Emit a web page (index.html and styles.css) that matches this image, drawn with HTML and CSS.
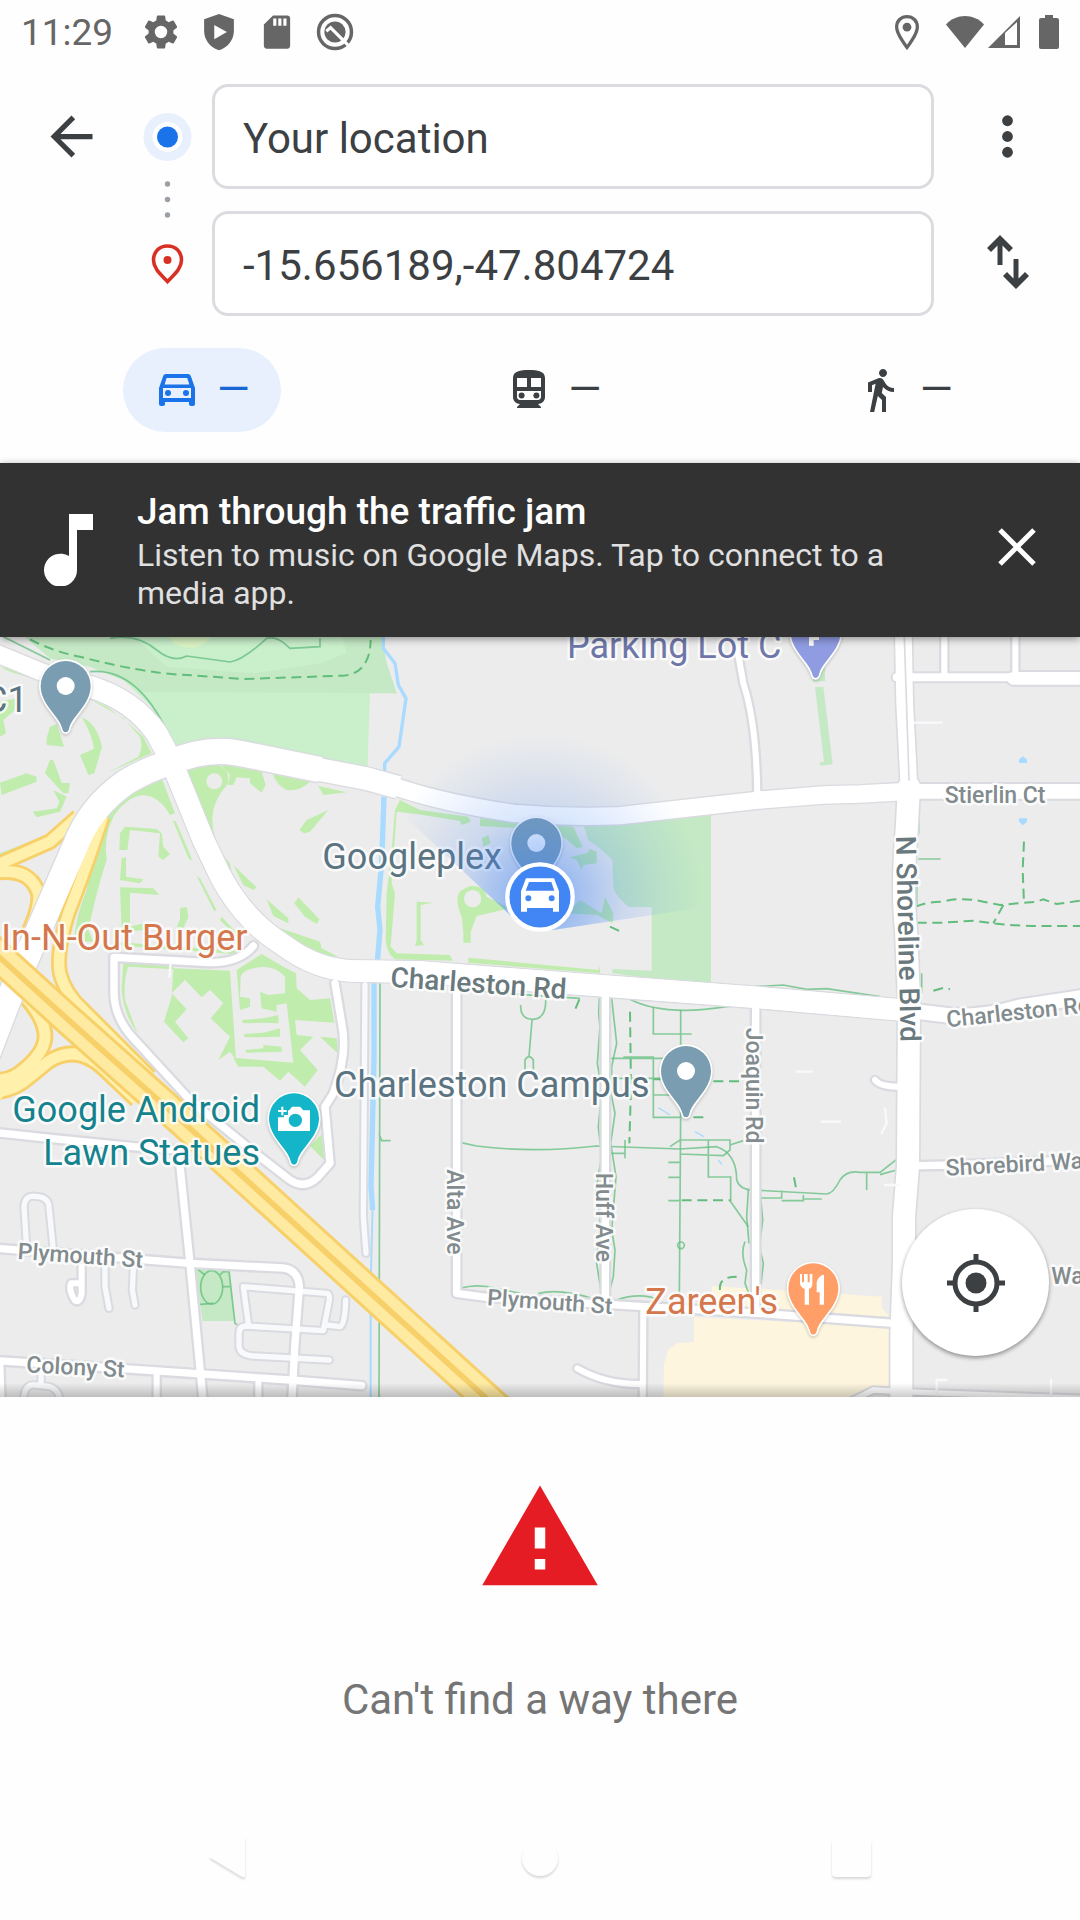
FILE: index.html
```html
<!DOCTYPE html>
<html lang="en">
<head>
<meta charset="utf-8">
<meta name="viewport" content="width=device-width, initial-scale=1">
<title>Directions</title>
<link rel="stylesheet" href="styles.css">
</head>
<body>
<div class="screen">
  <div class="status-bar">
    <div class="status-left">
      <span class="clock">11:29</span>
      <svg class="status-icon" viewBox="1 1 22 22"><path d="M19.140 12.940c.04-.3.06-.61.06-.94s-.02-.64-.07-.94l2.030-1.580a.49.49 0 0 0 .12-.61l-1.920-3.320a.49.49 0 0 0-.59-.22l-2.390.96a7 7 0 0 0-1.620-.94l-.36-2.540a.48.48 0 0 0-.48-.41h-3.840a.47.47 0 0 0-.47.41l-.36 2.540c-.59.24-1.130.57-1.620.94l-2.390-.96a.48.48 0 0 0-.59.22L2.740 8.870a.48.48 0 0 0 .12.61l2.030 1.580c-.05.3-.09.63-.09.94s.02.64.07.94l-2.030 1.580a.49.49 0 0 0-.12.61l1.920 3.320c.12.22.37.29.59.22l2.390-.96c.5.38 1.030.7 1.620.94l.36 2.540c.05.24.24.41.48.41h3.840c.24 0 .44-.17.47-.41l.36-2.540a7 7 0 0 0 1.620-.94l2.390.96c.22.08.47 0 .59-.22l1.920-3.320a.47.47 0 0 0-.12-.61zM12 15.600A3.600 3.600 0 1 1 12 8.400a3.600 3.600 0 0 1 0 7.200z"/></svg>
      <svg class="status-icon" viewBox="0 0 24 24"><path fill-rule="evenodd" d="M12 .6 2.600 4v7.200c0 5.600 3.600 10.600 9.400 12.400 5.800-1.800 9.400-6.800 9.400-12.400V4zM9 7.500v9l8-4.500z"/></svg>
      <svg class="status-icon" viewBox="0 0 24 24"><path fill-rule="evenodd" d="M18.500 1.500H9.500L3.700 7.300v13.400c0 1.100.8 1.800 1.800 1.800h13c1.100 0 1.800-.8 1.800-1.800V3.300c0-1-.8-1.800-1.800-1.800zM9.600 8V3.500h2V8zm3.200 0V3.500h2V8zm3.200 0V3.500h2V8z"/></svg>
      <svg class="status-icon" viewBox="0 0 24 24"><circle cx="12" cy="12" r="10.400" fill="none" stroke="#666" stroke-width="2.200"/><circle cx="12" cy="12" r="6.700"/><path d="m6.500 11.500 2.700-2.300 12.300 12.300" fill="none" stroke="#fff" stroke-width="2"/></svg>
    </div>
    <div class="status-right">
      <svg class="location" viewBox="0 0 24 24"><path d="M12 1.700c-4 0-6.900 2.900-6.900 6.900 0 5 6.900 13.700 6.900 13.700s6.900-8.700 6.900-13.700c0-4-2.900-6.900-6.900-6.900z" fill="none" stroke="#666" stroke-width="2.200"/><circle cx="12" cy="8.800" r="2.900"/></svg>
      <svg class="wifi" viewBox="0 0 40 34"><path d="M20 33 1 9.500C11-2 29-2 39 9.500z"/></svg>
      <svg class="signal" viewBox="0 0 34 34"><path fill-rule="evenodd" d="M1 33 33 1v32zM18 18v12h12V7z"/></svg>
      <svg class="battery" viewBox="0 0 20 34"><path d="M6 0h8v3h4q2 0 2 2v27q0 2-2 2H2q-2 0-2-2V5q0-2 2-2h4z"/></svg>
    </div>
  </div>

  <header class="route">
    <button class="icon-button back" aria-label="Back"><svg viewBox="0 0 24 24"><path d="M20 11H7.800l5.600-5.600L12 4l-8 8 8 8 1.400-1.400L7.800 13H20z"/></svg></button>
    <svg class="route-markers" viewBox="0 0 89 232" aria-hidden="true">
      <circle cx="44.500" cy="53" r="24" fill="#e8f0fe"/><circle cx="44.500" cy="53" r="15" fill="#fff"/><circle cx="44.500" cy="53" r="10.500" fill="#1a73e8"/>
      <g fill="#9aa0a6"><circle cx="44.500" cy="100" r="2.700"/><circle cx="44.500" cy="115.500" r="2.700"/><circle cx="44.500" cy="131" r="2.700"/></g>
      <path d="M44.500 162c-8.500 0-14 6-14 14 0 9 8 15 14 21.500 6-6.500 14-12.500 14-21.500 0-8-5.500-14-14-14z" fill="none" stroke="#d93025" stroke-width="3.600"/><circle cx="44.500" cy="176" r="4" fill="#d93025"/>
    </svg>
    <input class="place origin" type="text" aria-label="Starting point" value="Your location">
    <button class="icon-button more" aria-label="More options"><svg viewBox="0 0 24 24"><circle cx="12" cy="6" r="2.050"/><circle cx="12" cy="12" r="2.050"/><circle cx="12" cy="18" r="2.050"/></svg></button>
    <input class="place destination" type="text" aria-label="Destination" value="-15.656189,-47.804724">
    <button class="icon-button swap" aria-label="Swap start and destination"><svg viewBox="0 0 63 63"><path d="M24 3 11 16l4 4 6.500-6.500V33h5V13.500L33 20l4-4zM40 57 27 44l4-4 6.500 6.500V27h5v19.500L49 40l4 4z"/></svg></button>
  </header>

  <nav class="modes" aria-label="Travel mode">
    <button class="mode selected" aria-label="Driving"><svg viewBox="0 0 24 24"><path fill-rule="evenodd" d="M18.900 5c-.2-.6-.8-1-1.400-1h-11c-.7 0-1.200.4-1.400 1L3 11v8c0 .6.500 1 1 1h1c.6 0 1-.4 1-1v-1h12v1c0 .6.500 1 1 1h1c.6 0 1-.4 1-1v-8zM6.800 6h10.300l1.100 3.200H5.800zM19 16H5v-5h14z"/><circle cx="7.500" cy="13.500" r="1.500"/><circle cx="16.500" cy="13.500" r="1.500"/></svg><span>—</span></button>
    <button class="mode" aria-label="Transit"><svg viewBox="0 0 24 24"><path fill-rule="evenodd" d="M12 2c-4.400 0-8 .5-8 4v9.500C4 17.400 5.600 19 7.500 19L6 20.500v.5h12v-.5L16.500 19c1.900 0 3.500-1.600 3.500-3.500V6c0-3.500-3.600-4-8-4zM6 6h5v4.500H6zm7 0h5v4.500h-5zm3.500 11h-9c-.8 0-1.500-.7-1.500-1.500v-3h12v3c0 .8-.7 1.500-1.500 1.500z"/><circle cx="8.300" cy="14.800" r="1.500"/><circle cx="15.700" cy="14.800" r="1.500"/></svg><span>—</span></button>
    <button class="mode" aria-label="Walking"><svg viewBox="0 0 24 24"><path d="M13.500 5.500c1.100 0 2-.9 2-2s-.9-2-2-2-2 .9-2 2 .9 2 2 2zM9.800 8.900 7 23h2.100l1.800-8 2.100 2v6h2v-7.500l-2.100-2 .6-3A7.300 7.300 0 0 0 19 13v-2c-1.900 0-3.500-1-4.300-2.400l-1-1.600a2 2 0 0 0-1.700-1c-.3 0-.5.1-.8.1L6 8.300V13h2V9.600z"/></svg><span>—</span></button>
  </nav>

  <section class="banner">
    <svg class="note" viewBox="0 0 49 72"><path d="M25 0h24v16H33v40a16.500 16.500 0 1 1-8-14z"/></svg>
    <div class="banner-text">
      <h2>Jam through the traffic jam</h2>
      <p>Listen to music on Google Maps. Tap to connect to a media app.</p>
    </div>
    <button class="close" aria-label="Dismiss"><svg viewBox="0 0 38 38"><path d="m2 2 34 34M36 2 2 36" fill="none" stroke="#fff" stroke-width="5"/></svg></button>
  </section>

  <main class="map">
    <svg class="map-canvas" viewBox="0 21 3240 2280" preserveAspectRatio="xMidYMid slice" role="img" aria-label="Map around Googleplex">
      <defs>
        <radialGradient id="beam" gradientUnits="userSpaceOnUse" cx="1620" cy="801" r="490">
          <stop offset="0" stop-color="#4285f4" stop-opacity=".75"/><stop offset=".25" stop-color="#4285f4" stop-opacity=".42"/><stop offset=".5" stop-color="#4285f4" stop-opacity=".2"/><stop offset=".75" stop-color="#4285f4" stop-opacity=".09"/><stop offset="1" stop-color="#4285f4" stop-opacity="0"/>
        </radialGradient>
        <path id="pin" d="M0 139C-6 139-9 134-11 125C-20 90-75 55-75 0A75 75 0 0 1 75 0C75 55 20 90 11 125C9 134 6 139 0 139Z"/>
        <path id="parkway-west" d="M-60 1330L25 1110L125 880L225 650Q270 530 380 455Q450 415 510 398Q620 350 720 370L960 419"/>
        <path id="parkway-mid" d="M940 415L1100 446L1195 472"/>
        <path id="parkway-east" d="M1160 461L1210 478Q1340 520 1540 550Q1700 564 1860 557L2280 510L2470 495L2580 492L2726 484"/>
        <path id="charleston-nw" d="M-20 66L130 128L290 175"/>
        <path id="charleston" d="M270 170Q400 210 470 310Q510 380 545 470L610 630L660 735Q730 870 850 945Q950 1020 1060 1023L1260 1026L1800 1067L2280 1103L2726 1142"/>
        <path id="shoreline-north" d="M2710 0L2714 220L2727 470"/>
        <path id="shoreline" d="M2727 470L2720 600Q2705 780 2718 900L2727 1110L2724 1610L2712 1760L2712 1900L2704 2120V2320"/>
        <path id="freeway" d="M-40 947L200 1165L540 1468L1140 2015L1500 2342"/>
        <g id="streets">
          <path d="M1370 1060V1990L1460 2002L2280 2050L2680 2080"/><path d="M1816 1080V2020"/><path d="M2267 1110V2050"/>
          <path d="M2760 1607L2860 1605L3240 1590"/>
          <path d="M-10 1508L150 1525L400 1550L535 1560L570 1900L610 2320"/>
          <path d="M-10 1855L570 1900L850 1914Q895 1920 898 1970L885 2140L875 2320"/>
          <path d="M-10 2192L370 2216L870 2250L1085 2267"/>
          <path d="M760 948Q720 998 630 998L342 982V1080Q340 1160 400 1225L570 1410L760 1565L870 1650Q915 1680 955 1640L990 1600L975 1430L1000 1390Q1045 1270 1025 1180L1005 1060"/>
        </g>
        <g id="lanes">
          <path d="M2200 -10L2230 160Q2270 280 2272 500"/><path d="M2833 20V140"/><path d="M3046 20V140"/>
          <path d="M1930 2045L1928 2320"/><path d="M1732 2215Q1820 2265 1928 2262"/><path d="M2625 1350Q2640 1370 2695 1370"/>
          <path d="M470 2235V2320M775 2260V2320M1 2200L5 2320"/><path d="M245 1910V1990Q240 2020 225 2012Q205 1980 213 1960H240"/>
        </g>
        <g id="alleys">
          <path d="M1095 1065L1090 1760L1098 1870"/><path d="M80 1855L72 1730Q75 1695 105 1699Q145 1700 147 1730L160 1860"/>
          <path d="M315 1910V1970L327 2035M400 1915L397 1980L405 2025"/>
          <path d="M745 2080L730 1970L980 1990Q990 1992 988 2010L970 2102L735 2088Q715 2090 717 2120V2150Q720 2175 760 2178L988 2190M980 2085L1020 2090Q1035 2085 1037 2010"/>
          <path d="M70 2320Q70 2260 105 2265L150 2270Q180 2280 180 2320M123 2225V2265"/>
        </g>
        <g id="ramps">
          <path d="M-20 728Q90 710 115 790Q122 830 80 920"/>
          <path d="M-20 710L150 635L235 560"/>
          <path d="M75 1100Q138 1170 135 1225Q130 1270 70 1320Q30 1355 -20 1350"/>
          <path d="M-20 1385Q40 1385 90 1340L145 1295Q230 1240 310 1315L410 1410"/>
        </g>
        <path id="ramp-east" d="M308 560Q260 710 205 850Q168 970 180 1030Q195 1090 250 1140L450 1340"/>
      </defs>

      <rect class="land" x="-500" y="-500" width="4240" height="3300"/>

      <g class="park">
        <path d="M50 0H1140L1160 100L1190 190H1110L1102 425L720 345L520 345L450 225L370 150L270 110L150 85Z"/>
        <path class="park-dark" d="M50 0H1140L1160 100L1190 190L430 185L370 150L270 110L150 85Z"/>
        <path class="park-inner" d="M380 0H1020L1040 70L960 100L760 130L500 110Z"/>
        <path class="park-lime" d="M500 0H650L620 35Q575 70 520 40Z"/>
        <path class="park-dark" d="M1750 585L2133 550V1070L1837 1030V1017L1955 1022V832L1885 830Q1840 790 1840 770L1837 690L1800 655L1765 630Z"/>
        <path class="park-dark" d="M2445 172L2470 170L2498 403L2460 407V396H2472ZM2440 155V140L2475 100V153Z"/>
        <path class="park-dark" d="M583 1910L690 1920L705 2073H608Z"/>
      </g>

      <g class="grass">
        <path d="M0 110L70 125L130 145V155L30 125ZM0 215L50 205L45 240L10 270L18 310L0 320ZM150 290L170 282L192 350L140 345V325ZM245 262Q290 280 306 350L283 430L265 435L240 375L282 356Q275 310 245 262Z"/>
        <path d="M150 390H160L185 458L210 460L205 490L190 490L135 430ZM0 458L80 430L110 440V455L5 495ZM160 480L200 500L180 545L110 562L98 545L170 535L178 515ZM265 205L370 265L420 320Q430 350 415 380L320 430L430 380L455 370L430 320L380 275L320 230Z"/>
        <path d="M220 560L180 600L0 670V675L170 605Z"/>
        <path d="M330 550Q400 470 485 445L525 550L510 555Q480 500 430 495Q380 500 340 560Q310 620 320 690Q290 780 265 900L280 935H225Q220 880 260 780L290 600Z"/>
        <path d="M360 610L375 590L470 597L485 610L490 650L510 672L490 690L475 680L480 610L390 600L382 660H358ZM365 685L378 682V740L430 748L420 760L360 750ZM360 772L460 775L478 795L390 788V890L430 880L440 900L365 905ZM540 835L560 830L565 860L550 895L530 890L540 870Z"/>
        <path d="M518 570L528 575L577 690L567 688ZM590 738L600 745L650 840L642 843ZM665 860L710 910L705 915L660 870ZM340 935L740 965L700 972L340 945Z"/>
        <path fill-rule="evenodd" d="M555 415L640 402Q690 410 685 460Q640 510 637 560Q635 640 690 700L700 755L650 700ZM643 430A23 23 0 1 0 643 478A23 23 0 1 0 643 430Z"/>
        <path d="M660 402L785 425L797 465L785 488L750 460V445L710 442L700 465H685L690 435ZM818 432L930 455Q900 485 860 480Q830 465 818 432ZM955 468L1040 487L970 495ZM985 540L930 605L912 610L898 600L920 570ZM700 705L770 772L760 780L730 765ZM800 808L865 865V880L820 858ZM895 802L958 868L950 882L915 860L883 820ZM812 885L960 935L965 955L1015 980L960 975Z"/>
        <path d="M370 995L520 1010V1015L690 1022L708 1290L690 1265L655 1290L690 1220L632 1165L670 1120L630 1080L605 1102L555 1050L515 1090L560 1138L525 1175L565 1225L550 1237L492 1175L515 1100L520 1018L385 1010Q370 1050 375 1110L412 1210Q370 1150 365 1080Z"/>
        <path d="M710 1020L785 972L850 1010L888 1030L890 1075L930 1110L990 1105L1003 1178L885 1170L890 1215L940 1220L900 1260L953 1320L915 1370L865 1325L840 1352L790 1310L715 1310L700 1285L720 1285L880 1298L860 1120L830 1125V1145L785 1135L780 1085L805 1095L855 1090V1040Q820 1000 760 1015Q730 1020 722 1040L720 1100L750 1105V1130L720 1140ZM725 1170L790 1165L835 1155V1180L790 1178L730 1180ZM730 1212L790 1208L840 1195V1220L735 1222ZM735 1260L790 1255V1245L845 1250V1265L740 1268ZM960 1220L1010 1225L1015 1272Z"/>
        <path d="M930 1548L965 1513L975 1593Z"/>
        <path d="M1185 540L1200 510L1260 540L1405 560L1412 575L1385 585L1380 573L1250 552L1190 545L1175 760L1185 790L1172 950L1190 970L1350 975L1358 992L1185 988Q1160 970 1157 930L1160 790L1175 660Z"/>
        <path d="M1440 565L1720 590L1748 650L1730 655L1690 620L1660 600L1440 588ZM1445 625L1465 615L1472 640L1450 650ZM1708 682L1760 670L1770 657L1790 665V700L1750 705L1745 720L1730 690ZM1405 983L1795 1020L1800 1008V1030L1405 998ZM1250 815L1300 818L1262 825V930L1272 945L1245 948L1250 930Z"/>
        <path fill-rule="evenodd" d="M1410 768Q1455 765 1460 800L1530 835L1430 858L1412 905V938H1390V905L1385 860Q1360 800 1385 780ZM1418 780A26 26 0 1 0 1418 832A26 26 0 1 0 1418 780Z"/>
        <path d="M1700 850L1740 810L1805 850L1815 800L1840 850L1838 880L1790 855Z"/>
      </g>

      <g class="sand">
        <path d="M2082 2062L2680 2090L2670 2270L2500 2320H1990L1992 2200L2005 2160L2030 2140L2082 2136Z"/>
        <path d="M2135 1968L2490 1990L2645 2000V2035L2670 2060L2135 2040Z"/>
      </g>

      <g class="water">
        <path d="M1150 0L1150 55L1185 100L1195 165L1218 205L1210 260L1197 350L1154 400V440" stroke-width="10"/>
        <path d="M1152 500L1145 700L1133 830L1140 900L1132 995M1122 1060V1290L1113 1670L1118 1740" stroke-width="16"/>
        <path d="M1118 1730L1112 1960V2320" stroke-width="6"/>
        <path d="M1975 1433L2010 1455M2085 1505L2112 1520M2155 1590L2165 1603" stroke-width="4"/>
        <path d="M3062 391L3069 385L3076 391V394H3062ZM3062 570H3076V573L3069 579L3062 573Z" stroke-width="10"/>
      </g>

      <g class="trail">
        <path d="M10 20L150 90M270 125Q420 110 518 340M330 25Q410 10 470 60Q520 100 560 78L690 96Q730 90 800 25Q830 15 870 55L960 50V25"/>
        <path d="M1140 1060L1137 2320M1137 1510L1145 1532H1172"/>
        <path d="M1562 1125Q1560 1168 1600 1168Q1640 1165 1637 1105M1596 1170L1587 1280M1575 1320V1290Q1587 1270 1600 1290V1320"/>
        <path d="M1450 1085L1560 1093L1740 1105M1798 1105L1796 1150L1800 1190L1792 1300L1806 1380L1795 1490L1805 1580L1788 1680L1800 1760L1790 1900L1805 1995M1835 1105L1850 1240L1835 1310V1400L1845 1450L1832 1540L1848 1640L1835 1800L1845 1860L1840 1940L1828 1985M1890 1108Q1990 1160 2180 1130L2270 1120"/>
        <path d="M1380 1537L1430 1548Q1600 1570 1790 1548L2040 1557L2150 1550Q2210 1570 2210 1650Q2220 1680 2260 1680L2480 1692Q2500 1690 2520 1650Q2540 1620 2580 1627H2640L2690 1588M2640 1634L2690 1620M2600 1630V1680M2280 1704H2345V1682M2345 1712H2410V1695M2410 1707H2465"/>
        <path d="M1960 1132V1212H2075M2042 1140V1450L2038 2000M1870 1281H1960V1462H2042M1960 1395H2020M2010 1550L2040 1530H2190V1560L2170 1577L2040 1572M2125 1530V1641H2192V1715L2245 1790M2005 1597H2042M2005 1642H2042M2005 1712H2042M2190 1545L2230 1532M1875 1530V1585M1833 1570H1875M1833 1285H2015M1833 1345H2000"/>
        <path d="M2245 1680L2240 1760L2247 1840M2280 1680L2288 1770L2278 1850L2290 1900L2280 1990M2235 1835Q2220 1870 2240 1920L2235 1960L2250 2000"/>
        <circle cx="2043" cy="1846" r="10"/>
        <path d="M1380 1975Q1430 1960 1490 1975L1560 1990M1615 1990Q1680 1975 1775 2005M1850 2010Q1920 1985 1980 2010"/>
        <path d="M583 1910L615 1935M600 2023L640 2020M668 1970H690M660 1935L670 1925H687L705 2080L715 2087"/><ellipse cx="635" cy="1972" rx="33" ry="50"/>
        <path d="M2265 1070L2350 1065L2420 1078L2480 1076L2640 1100M2756 530V610M2755 687H2822M2750 760V830M2765 1030V1090"/>
      </g>
      <g class="trail dashed">
        <path d="M90 28Q160 65 240 80Q430 130 560 135L730 147L1030 137Q1110 130 1112 30"/>
        <path d="M1890 1145L1893 1370L1888 1540M2140 1354H2220M1960 1348H1985M2080 1462H2120M2045 1711H2192M2160 1980Q2155 1940 2210 1940"/>
        <path d="M2748 830Q2780 815 2830 815Q2880 800 2950 815L3000 825L3110 815L3130 808L3170 822L3240 812M2750 878H2830L2920 872L2980 880Q3050 890 3240 888M3010 825L2980 880M3072 635L3068 720L3072 818M2800 1082L2830 1074L2850 1078"/>
        <path d="M1830 890L1862 905M1738 1108L1724 1142M2382 1642L2390 1685"/>
      </g>

      <g class="casing">
        <use href="#alleys" stroke-width="28"/><use href="#lanes" stroke-width="32"/><use href="#streets" stroke-width="36"/>
        <path d="M2690 142H3240" stroke-width="36"/><path d="M3040 145H3240" stroke-width="50"/>
        <path d="M2727 484H3260" stroke-width="56"/><path d="M2730 1142L2860 1158Q2960 1160 3060 1130L3260 1100" stroke-width="56"/>
        <path d="M2500 2340L2620 2280L2700 2285L3260 2305" stroke-width="28"/>
        <use class="square" href="#parkway-mid" stroke-width="76"/><use class="square" href="#parkway-east" stroke-width="60"/><use href="#charleston-nw" stroke-width="60"/><use href="#charleston" stroke-width="72"/><use href="#shoreline-north" stroke-width="60"/><use href="#shoreline" stroke-width="76"/>
      </g>
      <g class="surface">
        <use class="alley" href="#alleys" stroke-width="16"/><use href="#lanes" stroke-width="18"/><use href="#streets" stroke-width="22"/>
        <path d="M2690 142H3240" stroke-width="24"/><path d="M3040 145H3240" stroke-width="38"/>
        <path d="M2727 484H3260" stroke-width="44"/><path d="M2730 1142L2860 1158Q2960 1160 3060 1130L3260 1100" stroke-width="44"/>
        <path d="M2500 2340L2620 2280L2700 2285L3260 2305" stroke-width="16"/>
        <use href="#charleston-nw" stroke-width="52"/><use href="#charleston" stroke-width="64"/><use href="#parkway-east" stroke-width="52"/><use href="#shoreline-north" stroke-width="50"/><use href="#shoreline" stroke-width="66"/>
        <path class="faint" d="M2745 278H2825M2390 1325H2436M2465 1475H2520M2655 1435L2660 1480L2645 1510M2655 1665H2695M2810 2295V2250H2840M3153 2300V2250M512 1000L508 1040" stroke-width="7"/>
        <path class="median" d="M2713 20L2727 450" stroke-width="5"/>
      </g>

      <g class="ramp-edge"><use href="#ramps" stroke-width="50"/></g>
      <g class="ramp"><use href="#ramps" stroke-width="33"/><path d="M-20 1350L60 1330L0 1395Z" stroke-width="20"/></g>
      <g class="casing"><use class="square" href="#parkway-west" stroke-width="84"/></g>
      <g class="ramp-edge"><use href="#ramp-east" stroke-width="48"/></g>
      <g class="ramp"><use href="#ramp-east" stroke-width="32"/></g>
      <g class="surface"><use class="square" href="#parkway-west" stroke-width="76"/><use class="square" href="#parkway-mid" stroke-width="68"/><use href="#charleston" stroke-width="64"/></g>
      <g class="freeway">
        <use href="#freeway" stroke="#f7d06a" stroke-width="98"/><use href="#freeway" stroke="#ffeaa2" stroke-width="80"/><use href="#freeway" stroke="#f7d06a" stroke-width="17"/>
      </g>

      <g class="labels">
        <g class="poi slate"><text x="83" y="245" text-anchor="end">C1</text><text x="967" y="716">Googleplex</text><text x="1002" y="1400">Charleston Campus</text></g>
        <g class="poi indigo"><text x="1701" y="83">Parking Lot C</text></g>
        <g class="poi orange"><text x="4" y="961">In-N-Out Burger</text><text x="1936" y="2053">Zareen's</text></g>
        <g class="poi teal"><text x="780" y="1476" text-anchor="end">Google Android</text><text x="780" y="1606" text-anchor="end">Lawn Statues</text></g>
        <g class="avenue"><text transform="translate(1170 1070) rotate(4)">Charleston Rd</text><text transform="translate(2688 618) rotate(88.700)">N Shoreline Blvd</text></g>
        <g class="street">
          <text transform="translate(52 1887) rotate(4)">Plymouth St</text><text transform="translate(78 2227) rotate(3)">Colony St</text><text transform="translate(1460 2026) rotate(4)">Plymouth St</text>
          <text transform="translate(1341 1618) rotate(90)">Alta Ave</text><text transform="translate(1788 1628) rotate(90)">Huff Ave</text><text transform="translate(2238 1193) rotate(90)">Joaquin Rd</text>
          <text x="2834" y="520">Stierlin Ct</text><text transform="translate(2842 1192) rotate(-6)">Charleston Rd</text><text transform="translate(2838 1637) rotate(-3)">Shorebird Way</text><text x="3154" y="1961">Way</text>
        </g>
      </g>

      <g class="pins">
        <g transform="translate(197 168)"><use href="#pin" fill="#7b9db1"/><circle r="27" fill="#fff"/></g>
        <g transform="translate(1609 639)"><use href="#pin" fill="#7b9db1"/><circle r="27" fill="#fff"/></g>
        <g transform="translate(2058 1323)"><use href="#pin" fill="#7b9db1"/><circle r="27" fill="#fff"/></g>
        <g transform="translate(882 1465)"><use href="#pin" fill="#15b5c9"/><path fill="#fff" fill-rule="evenodd" d="M-42-35H-32V-25H-22V-19H-32V-9H-38V-19H-48V-25H-38V-35ZM-14-24L-6-35H18L28-24H48V38H-48V-3H-30V-10H-18V-24ZM4-14A20 20 0 1 0 4 26A20 20 0 1 0 4-14Z"/></g>
        <g transform="translate(2440 1975)"><use href="#pin" fill="#ff9e67"/><path fill="#fff" d="M-40-43H-34V-18H-28V-43H-17V-18H-11V-43H-3V-13Q-3-2-13 2V49H-26V2Q-40-4-40-15ZM32-41V49H19V12H10V-18Q14-38 32-41Z"/></g>
        <g transform="translate(2447 5)"><use href="#pin" fill="#909ce1"/><path fill="#fff" d="M-20 0H10V25H-6V42H-20Z"/></g>
      </g>

      <path d="M1535 860L1150 500A490 490 0 0 1 2140 827L1660 900Z" fill="url(#beam)"/>
      <circle cx="1620" cy="801" r="98" fill="#4285f4" stroke="#fff" stroke-width="13"/>
      <path fill="#fff" fill-rule="evenodd" d="M1578 745H1662L1677 784V845H1659V834H1581V845H1563V784ZM1587 756L1577 782H1663L1654 756ZM1585 796A9 9 0 1 0 1585 814A9 9 0 1 0 1585 796ZM1655 796A9 9 0 1 0 1655 814A9 9 0 1 0 1655 796Z"/>
    </svg>
    <button class="locate" aria-label="My location"><svg viewBox="0 0 58 58"><circle cx="29" cy="29" r="21" fill="none" stroke="#3c4043" stroke-width="5"/><circle cx="29" cy="29" r="10.500"/><path d="M26.500 0h5v10h-5zM26.500 48h5v10h-5zM0 26.500h10v5H0zM48 26.500h10v5H48z"/></svg></button>
  </main>

  <section class="sheet" role="alert">
    <svg class="warning" viewBox="0 0 24 24"><path d="M1 21h22L12 2zm12-3h-2v-2h2zm0-4h-2v-4h2z"/></svg>
    <p>Can't find a way there</p>
  </section>

  <footer class="system-nav">
    <button aria-label="Back"><svg viewBox="0 0 48 48"><path d="m5 24 34-21q2 0 2 2v38q0 2-3 1z"/></svg></button>
    <button aria-label="Home"><svg viewBox="0 0 48 48"><circle cx="24" cy="25" r="18"/></svg></button>
    <button aria-label="Recent apps"><svg viewBox="0 0 48 48"><rect x="4" y="6" width="39" height="38" rx="4"/></svg></button>
  </footer>
</div>
</body>
</html>
```
FILE: styles.css
```css
* { box-sizing: border-box; }

body {
  margin: 0;
  background: #fefefe;
  color: #3c4043;
  font-family: Roboto, "Liberation Sans", sans-serif;
}

button {
  display: flex;
  align-items: center;
  justify-content: center;
  margin: 0;
  padding: 0;
  border: 0;
  background: none;
  color: inherit;
  font: inherit;
}

h2, p { margin: 0; }

svg { display: block; }

.screen {
  display: flex;
  flex-direction: column;
  min-height: 100vh;
}

/* Status bar */
.status-bar {
  display: flex;
  align-items: center;
  justify-content: space-between;
  height: 63px;
  padding: 0 21px;
  color: #666;
  fill: #666;
}

.status-left, .status-right { display: flex; align-items: center; }
.status-left { gap: 20px; }
.clock { width: 101px; padding-top: 2px; font-size: 37px; line-height: 44px; }
.status-icon { width: 38px; height: 38px; }
.location { width: 36px; height: 36px; margin-right: 20px; }
.wifi { width: 40px; height: 34px; }
.signal { width: 34px; height: 34px; margin: 0 18px 0 2px; }
.battery { width: 20px; height: 34px; }

/* Route inputs */
.route {
  display: grid;
  grid-template-columns: 123px 89px minmax(0, 1fr) 146px;
  grid-template-rows: 105px 105px;
  row-gap: 22px;
  align-items: center;
  padding-top: 21px;
}

.icon-button { width: 63px; height: 63px; fill: #3c4043; justify-self: center; }
.icon-button svg { width: 63px; height: 63px; }
.back { grid-area: 1 / 1; justify-self: end; margin-right: 20px; }
.route-markers { grid-area: 1 / 2 / 3 / 3; width: 89px; height: 232px; }
.origin { grid-area: 1 / 3; }
.more { grid-area: 1 / 4; }
.destination { grid-area: 2 / 3; font-kerning: none; }
.swap { grid-area: 2 / 4; }

.place {
  width: 100%;
  height: 105px;
  padding: 4px 28px 0;
  border: 3px solid #dadce0;
  border-radius: 16px;
  background: #fff;
  color: #3c4043;
  font-family: Roboto, "Liberation Sans", sans-serif;
  font-size: 42px;
  line-height: 50px;
}

/* Travel modes */
.modes {
  display: flex;
  justify-content: space-between;
  padding: 32px 96px 31px 123px;
}

.mode {
  justify-content: flex-start;
  gap: 16px;
  width: 158px;
  height: 84px;
  padding-left: 30px;
  border-radius: 42px;
  fill: #3c4043;
  font-size: 42px;
  line-height: 50px;
}

.mode svg { width: 48px; height: 48px; }
.selected { background: #e8f0fe; color: #1967d2; fill: #1a73e8; }

/* Music banner */
.banner {
  position: relative;
  z-index: 1;
  display: grid;
  grid-template-columns: 93px minmax(0, 1fr) 127px;
  column-gap: 44px;
  align-items: center;
  min-height: 174px;
  padding: 20px 0;
  background: #323232;
  box-shadow: 0 2px 8px rgba(0, 0, 0, .4);
  color: #fff;
}

.note { width: 49px; height: 72px; justify-self: end; fill: #fff; }
.banner h2 { font-size: 37px; font-weight: 500; line-height: 48px; }
.banner p { color: #e0e0e0; font-size: 32px; line-height: 38px; }
.close { align-self: start; justify-self: center; height: 63px; width: 63px; margin-top: 32px; }
.close svg { width: 38px; height: 38px; }

/* Map */
.map {
  position: relative;
  display: grid;
  flex: 1 0 auto;
  min-height: 400px;
  overflow: hidden;
}

.map::after {
  content: "";
  position: absolute;
  right: 0;
  bottom: 0;
  left: 0;
  height: 14px;
  background: linear-gradient(rgba(0, 0, 0, 0), rgba(0, 0, 0, .2));
}

.map-canvas { width: 100%; height: 100%; }
.land { fill: #ececec; }
.park { fill: #c9efcb; }
.park-dark { fill: #c5e9c4; }
.park-inner { fill: #c9efcb; }
.park-lime { fill: #d9f3c3; }
.grass { fill: #c0ecad; }
.sand { fill: #fdf5dd; }
.water { fill: #a9daff; stroke: #a9daff; }
.water path:not(:last-child) { fill: none; }
.trail { fill: none; stroke: #62bd7d; stroke-opacity: .75; stroke-width: 5; }
.dashed { stroke-opacity: 1; stroke-dasharray: 30 17; stroke-width: 6; }
.casing { fill: none; stroke: #dadbe0; stroke-linecap: round; stroke-linejoin: round; }
.surface { fill: none; stroke: #fff; stroke-linecap: round; stroke-linejoin: round; }
.square { stroke-linecap: butt; }
.alley, .faint { stroke: #f8f9fb; }
.median { stroke: #dadbe0; }
.ramp-edge { fill: none; stroke: #f7d06a; }
.ramp { fill: none; stroke: #fff0ab; }
.freeway { fill: none; }

.labels text {
  stroke: #fff;
  stroke-opacity: .8;
  stroke-width: 15px;
  stroke-linejoin: round;
  paint-order: stroke;
}

.poi { font-size: 108px; }
.slate { fill: #5b7482; }
.indigo { fill: #6f77a8; }
.orange { fill: #d5774c; }
.teal { fill: #15838d; }
.avenue { fill: #6a797e; font-size: 84px; font-weight: 500; }
.street { fill: #828b8e; font-size: 69px; font-weight: 500; }
.pins use { stroke: #fff; stroke-width: 10px; paint-order: stroke; filter: drop-shadow(0 4px 4px rgba(0, 0, 0, .2)); }

.locate {
  position: absolute;
  right: 31px;
  bottom: 41px;
  width: 147px;
  height: 147px;
  border-radius: 50%;
  background: #fff;
  box-shadow: 0 2px 4px rgba(0, 0, 0, .4);
  fill: #3c4043;
}

.locate svg { width: 58px; height: 58px; }

/* Result sheet */
.sheet {
  display: flex;
  flex-direction: column;
  align-items: center;
  gap: 74px;
  padding: 78px 24px 70px;
  color: #757575;
  font-size: 42px;
  line-height: 49px;
  text-align: center;
}

.warning { width: 126px; height: 126px; fill: #e51c23; }

/* System navigation */
.system-nav {
  display: flex;
  justify-content: space-between;
  height: 126px;
  padding: 0 180px;
}

.system-nav button { width: 96px; }
.system-nav svg { width: 48px; height: 48px; overflow: visible; fill: #fefefe; filter: drop-shadow(0 2px 1px rgba(0, 0, 0, .15)); }
```
